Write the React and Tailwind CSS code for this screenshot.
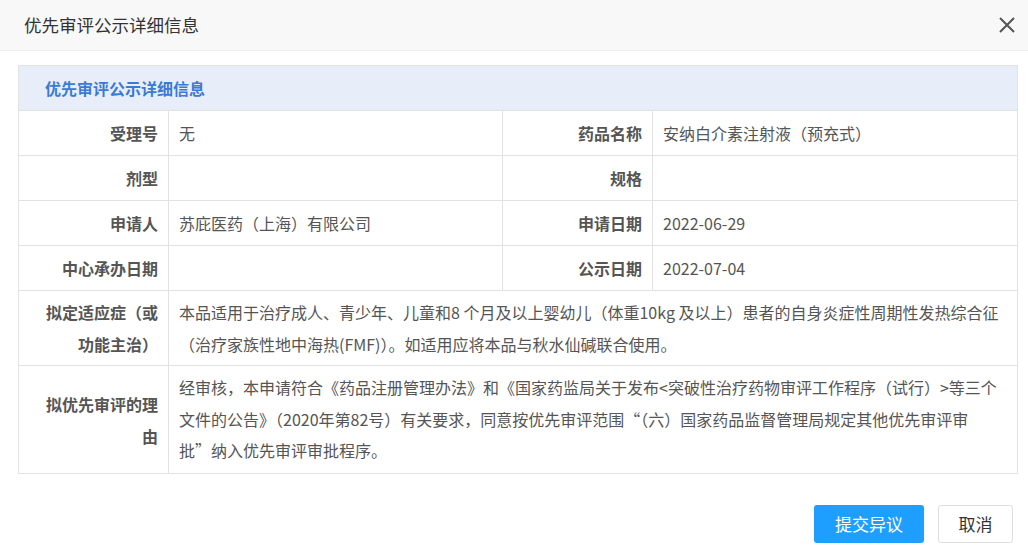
export default function App() {
  const f = { fontFamily: '"Noto Sans CJK SC", "Liberation Sans", sans-serif' };
  const L = "border-r border-b border-[#e2e2e2] text-right font-bold text-[16px] text-[#555] pr-[10px] pl-[14px] align-middle";
  const V = "border-r border-b border-[#e2e2e2] text-[16px] text-[#555] px-[10px] align-middle";
  return (
    <div style={f} className="w-[1028px] h-[550px] bg-white relative overflow-hidden">
      <div className="h-[51px] bg-[#f8f8f8] border-b border-[#eee] flex items-center justify-between pl-[24px] pr-[12px]">
        <span className="text-[17.5px] text-[#333]">优先审评公示详细信息</span>
        <svg width="18" height="18" viewBox="0 0 18 18"><path d="M2 2L16 16M16 2L2 16" stroke="#555" strokeWidth="2" /></svg>
      </div>
      <div className="px-[18px] pt-[14px]">
        <table className="w-[1000px] border-collapse border-l border-t border-[#e2e2e2] table-fixed">
          <colgroup><col className="w-[150px]" /><col className="w-[334px]" /><col className="w-[150px]" /><col /></colgroup>
          <tbody>
            <tr className="h-[45px] bg-[#e8eef9]"><td colSpan={4} className="border-r border-b border-[#e2e2e2] pl-[26px] text-[16px] font-bold text-[#3b7ad6]">优先审评公示详细信息</td></tr>
            <tr className="h-[45px]"><td className={L}>受理号</td><td className={V}>无</td><td className={L}>药品名称</td><td className={V}>安纳白介素注射液（预充式）</td></tr>
            <tr className="h-[45px]"><td className={L}>剂型</td><td className={V}></td><td className={L}>规格</td><td className={V}></td></tr>
            <tr className="h-[45px]"><td className={L}>申请人</td><td className={V}>苏庇医药（上海）有限公司</td><td className={L}>申请日期</td><td className={V}>2022-06-29</td></tr>
            <tr className="h-[45px]"><td className={L}>中心承办日期</td><td className={V}></td><td className={L}>公示日期</td><td className={V}>2022-07-04</td></tr>
            <tr className="h-[75px]"><td className={L + " leading-[32px]"}>拟定适应症（或功能主治）</td><td colSpan={3} className={V + " leading-[32px]"}>本品适用于治疗成人、青少年、儿童和8 个月及以上婴幼儿（体重10kg 及以上）患者的自身炎症性周期性发热综合征（治疗家族性地中海热(FMF)）。如适用应将本品与秋水仙碱联合使用。</td></tr>
            <tr className="h-[108px]"><td className={L + " leading-[32px]"}>拟优先审评的理由</td><td colSpan={3} className={V + " leading-[31.5px]"}>经审核，本申请符合《药品注册管理办法》和《国家药监局关于发布&lt;突破性治疗药物审评工作程序（试行）&gt;等三个文件的公告》（2020年第82号）有关要求，同意按优先审评范围“（六）国家药品监督管理局规定其他优先审评审批”纳入优先审评审批程序。</td></tr>
          </tbody>
        </table>
      </div>
      <div className="absolute left-[814px] top-[505px] flex gap-[14px]">
        <button className="w-[110px] h-[38px] rounded-[3px] bg-[#1e9fff] text-white text-[17px]">提交异议</button>
        <button className="w-[75px] h-[38px] rounded-[3px] border border-[#ddd] bg-white text-[#333] text-[17px]">取消</button>
      </div>
    </div>
  );
}
